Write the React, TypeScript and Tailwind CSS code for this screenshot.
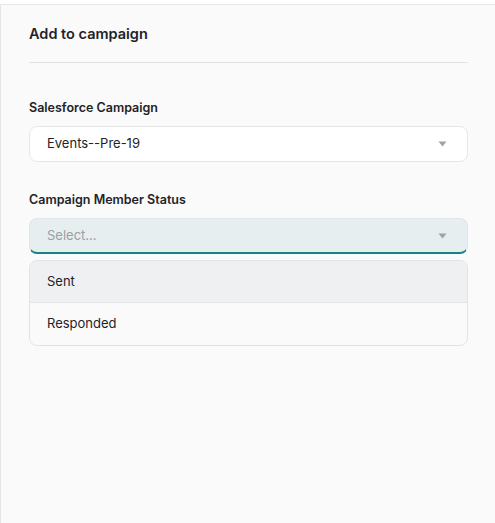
import React from "react";

function Caret() {
  return (
    <svg width="9" height="6" viewBox="0 0 9 6" className="shrink-0">
      <path d="M0.5 0.5h8L4.5 5.5z" fill="#9ca3af" />
    </svg>
  );
}

export default function App() {
  return (
    <div className="h-[523px] w-[495px] bg-white pt-1 font-['Inter',sans-serif] text-[#1f2328]">
      <div className="h-full border-l border-t border-[#e5e5e5] bg-[#fafafa] pl-[28px] pr-[27px]">
        <div className="flex h-[58px] items-center border-b border-[#e3e3e3]">
          <h2 className="text-[14.5px] font-semibold">Add to campaign</h2>
        </div>

        <div className="mt-[37px]">
          <label className="block text-[12.5px] font-semibold leading-[16px]">Salesforce Campaign</label>
          <div className="mt-[10px] flex h-[36px] items-center justify-between rounded-lg border border-[#e7e7e7] bg-white pl-[17px] pr-[20px]">
            <span className="text-[13px]">Events--Pre-19</span>
            <Caret />
          </div>
        </div>

        <div className="mt-[30px]">
          <label className="block text-[12.5px] font-semibold leading-[16px]">Campaign Member Status</label>
          <div className="mt-[10px] flex h-[36px] items-center justify-between rounded-lg border border-[#dfe6e7] border-b-2 border-b-[#17808a] bg-[#e6eeef] pl-[17px] pr-[20px]">
            <span className="text-[13px] text-[#9a9fa3]">Select...</span>
            <Caret />
          </div>
          <div className="mt-[6px] overflow-hidden rounded-lg border border-[#e3e3e3] bg-[#fafafa]">
            <div className="flex h-[42px] items-center border-b border-[#e6e6e6] bg-[#eff0f1] pl-[17px] text-[13px]">Sent</div>
            <div className="flex h-[42px] items-center pl-[17px] text-[13px]">Responded</div>
          </div>
        </div>
      </div>
    </div>
  );
}
